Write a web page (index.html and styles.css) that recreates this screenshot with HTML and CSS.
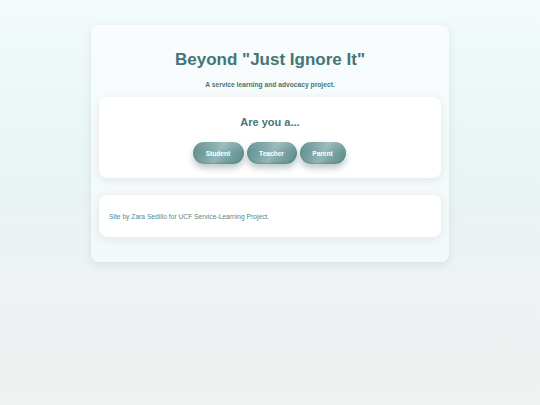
FILE: index.html
```html
<!DOCTYPE html>
<html>
<head>
<meta charset="utf-8">
<link rel="stylesheet" href="styles.css">
</head>
<body>
<div class="page">
  <main class="container">
    <h1 class="title">Beyond "Just Ignore It"</h1>
    <p class="subtitle">A service learning and advocacy project.</p>
    <section class="card role-card">
      <h2 class="role-heading">Are you a...</h2>
      <div class="role-buttons">
        <button class="pill">Student</button>
        <button class="pill">Teacher</button>
        <button class="pill">Parent</button>
      </div>
    </section>
    <footer class="card footer-card">
      <p class="credit">Site by Zara Sedillo for UCF Service-Learning Project.</p>
    </footer>
  </main>
</div>
</body>
</html>
```
FILE: styles.css
```css
html, body {
  margin: 0;
  padding: 0;
  height: 100%;
}
body {
  font-family: "Liberation Sans", Arial, sans-serif;
  background: linear-gradient(180deg, #f3fbfb 0%, #e8f4f5 40%, #edf2f2 65%, #f0f1f1 100%);
}
.page {
  padding-top: 25px;
}
.container {
  width: 358px;
  margin: 0 auto;
  box-sizing: border-box;
  padding: 0 8px 8px;
  background: linear-gradient(180deg, #f8fcfc 0%, #f3f8f9 100%);
  border-radius: 8px;
  box-shadow: 0 2px 8px rgba(60, 100, 105, 0.12);
  display: flex;
  flex-direction: column;
}
.title {
  margin: 24px 0 0;
  font-size: 17px;
  line-height: 21px;
  font-weight: bold;
  color: #437676;
  text-align: center;
}
.subtitle {
  margin: 10px 0 0;
  font-size: 6.7px;
  line-height: 9px;
  font-weight: bold;
  color: #4c7474;
  text-align: center;
}
.card {
  background: #ffffff;
  border-radius: 8px;
  box-shadow: 0 2px 8px rgba(70, 110, 115, 0.12);
}
.role-card {
  margin-top: 8px;
  padding: 18px 0 14px;
  display: flex;
  flex-direction: column;
  align-items: center;
}
.role-heading {
  margin: 0;
  font-size: 11px;
  line-height: 15px;
  font-weight: bold;
  color: #497676;
}
.role-buttons {
  margin-top: 12px;
  margin-right: 2px;
  display: flex;
  gap: 3px;
}
.pill {
  height: 22px;
  padding: 0;
  border: none;
  border-radius: 11px;
  font-family: "Liberation Sans", Arial, sans-serif;
  font-size: 6.6px;
  font-weight: bold;
  color: #ffffff;
  background:
    linear-gradient(180deg, rgba(255, 255, 255, 0.12) 0%, rgba(255, 255, 255, 0) 45%),
    linear-gradient(120deg, #5a8a8a 0%, #7ea6a6 35%, #94b7b7 50%, #7ea6a6 65%, #5a8a8a 100%);
  box-shadow: 0 4px 6px rgba(40, 70, 70, 0.3), inset 0 -1px 2px rgba(40, 80, 80, 0.25);
}
.pill:nth-child(1) { width: 51px; }
.pill:nth-child(2) { width: 50px; }
.pill:nth-child(3) { width: 46px; }
.footer-card {
  margin-top: 17px;
  margin-bottom: 17px;
  height: 42px;
  box-sizing: border-box;
  padding: 0 10px;
  display: flex;
  align-items: center;
}
.credit {
  margin: 0;
  font-size: 6.7px;
  color: #5b8686;
}
```
